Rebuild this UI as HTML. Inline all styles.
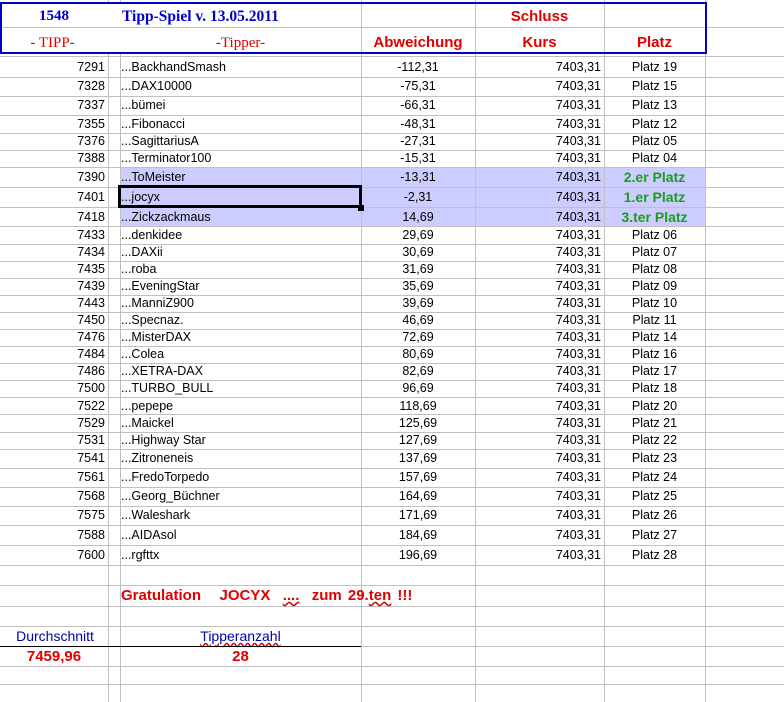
<!DOCTYPE html>
<html><head><meta charset="utf-8"><style>
*{margin:0;padding:0;box-sizing:border-box}
body{width:784px;height:702px;background:#fff;position:relative;overflow:hidden;font-family:"Liberation Sans",Arial,sans-serif;font-size:12.5px;color:#000}
.v{position:absolute;top:0;width:1px;height:702px;background:#c0c0c0}
.h{position:absolute;left:0;width:784px;height:1px;background:#c0c0c0}
.r{position:absolute;left:0;width:784px}
.r span{position:absolute;top:0;white-space:nowrap}
.a{left:0;width:105px;text-align:right}
.b{left:121px}
.c{left:361px;width:114px;text-align:center}
.d{left:475px;width:126px;text-align:right}
.e{left:604px;width:101px;text-align:center}
.g{color:#1a9e1a;font-weight:bold;font-size:14px}
.hl{position:absolute;left:120px;width:585px;top:167px;height:59px;background:#ccccff}
</style></head><body>
<div class="hl"></div>
<div class="v" style="left:108px"></div>
<div class="v" style="left:120px"></div>
<div class="v" style="left:361px"></div>
<div class="v" style="left:475px"></div>
<div class="v" style="left:604px"></div>
<div class="v" style="left:705px"></div>
<div class="h" style="top:27px"></div>
<div class="h" style="top:56px"></div><div class="h" style="top:77px"></div><div class="h" style="top:96px"></div><div class="h" style="top:115px"></div><div class="h" style="top:133px"></div><div class="h" style="top:150px"></div><div class="h" style="top:167px"></div><div class="h" style="top:187px"></div><div class="h" style="top:207px"></div><div class="h" style="top:226px"></div><div class="h" style="top:244px"></div><div class="h" style="top:261px"></div><div class="h" style="top:278px"></div><div class="h" style="top:295px"></div><div class="h" style="top:312px"></div><div class="h" style="top:329px"></div><div class="h" style="top:346px"></div><div class="h" style="top:363px"></div><div class="h" style="top:380px"></div><div class="h" style="top:397px"></div><div class="h" style="top:414px"></div><div class="h" style="top:432px"></div><div class="h" style="top:449px"></div><div class="h" style="top:468px"></div><div class="h" style="top:487px"></div><div class="h" style="top:506px"></div><div class="h" style="top:525px"></div><div class="h" style="top:545px"></div><div class="h" style="top:565px"></div><div class="h" style="top:585px"></div><div class="h" style="top:606px"></div><div class="h" style="top:626px"></div><div class="h" style="top:646px"></div><div class="h" style="top:666px"></div><div class="h" style="top:684px"></div>

<!-- header box -->
<div style="position:absolute;left:0;top:2px;width:707px;height:52px;border:2px solid #0000cc;background:#fff"></div>
<div style="position:absolute;left:361px;top:4px;width:1px;height:48px;background:#c0c0c0"></div>
<div style="position:absolute;left:475px;top:4px;width:1px;height:48px;background:#c0c0c0"></div>
<div style="position:absolute;left:604px;top:4px;width:1px;height:48px;background:#c0c0c0"></div>
<div style="position:absolute;left:2px;top:27px;width:703px;height:1px;background:#c0c0c0"></div>
<div style="position:absolute;left:0;top:8px;width:108px;text-align:center;font:bold 15px 'Liberation Serif',serif;color:#0000cc">1548</div>
<div style="position:absolute;left:122px;top:8px;font:bold 15.5px 'Liberation Serif',serif;color:#0000cc">Tipp-Spiel v. 13.05.2011</div>
<div style="position:absolute;left:475px;top:8px;width:129px;text-align:center;font:bold 15px 'Liberation Sans',sans-serif;color:#e00000">Schluss</div>
<div style="position:absolute;left:0;top:35px;width:105px;text-align:center;font:15px 'Liberation Serif',serif;color:#e00000">- TIPP-</div>
<div style="position:absolute;left:120px;top:35px;width:241px;text-align:center;font:15px 'Liberation Serif',serif;color:#e00000">-Tipper-</div>
<div style="position:absolute;left:361px;top:34px;width:114px;text-align:center;font:bold 15px 'Liberation Sans',sans-serif;color:#e00000">Abweichung</div>
<div style="position:absolute;left:475px;top:34px;width:129px;text-align:center;font:bold 15px 'Liberation Sans',sans-serif;color:#e00000">Kurs</div>
<div style="position:absolute;left:604px;top:34px;width:101px;text-align:center;font:bold 15px 'Liberation Sans',sans-serif;color:#e00000">Platz</div>

<div class="r" style="top:57px;line-height:20px"><span class="a">7291</span><span class="b">...BackhandSmash</span><span class="c">-112,31</span><span class="d">7403,31</span><span class="e">Platz 19</span></div>
<div class="r" style="top:77px;line-height:19px"><span class="a">7328</span><span class="b">...DAX10000</span><span class="c">-75,31</span><span class="d">7403,31</span><span class="e">Platz 15</span></div>
<div class="r" style="top:96px;line-height:19px"><span class="a">7337</span><span class="b">...bümei</span><span class="c">-66,31</span><span class="d">7403,31</span><span class="e">Platz 13</span></div>
<div class="r" style="top:115px;line-height:18px"><span class="a">7355</span><span class="b">...Fibonacci</span><span class="c">-48,31</span><span class="d">7403,31</span><span class="e">Platz 12</span></div>
<div class="r" style="top:133px;line-height:17px"><span class="a">7376</span><span class="b">...SagittariusA</span><span class="c">-27,31</span><span class="d">7403,31</span><span class="e">Platz 05</span></div>
<div class="r" style="top:150px;line-height:17px"><span class="a">7388</span><span class="b">...Terminator100</span><span class="c">-15,31</span><span class="d">7403,31</span><span class="e">Platz 04</span></div>
<div class="r" style="top:167px;line-height:20px"><span class="a">7390</span><span class="b">...ToMeister</span><span class="c">-13,31</span><span class="d">7403,31</span><span class="e g">2.er Platz</span></div>
<div class="r" style="top:187px;line-height:20px"><span class="a">7401</span><span class="b">...jocyx</span><span class="c">-2,31</span><span class="d">7403,31</span><span class="e g">1.er Platz</span></div>
<div class="r" style="top:207px;line-height:20px"><span class="a">7418</span><span class="b">...Zickzackmaus</span><span class="c">14,69</span><span class="d">7403,31</span><span class="e g">3.ter Platz</span></div>
<div class="r" style="top:226px;line-height:18px"><span class="a">7433</span><span class="b">...denkidee</span><span class="c">29,69</span><span class="d">7403,31</span><span class="e">Platz 06</span></div>
<div class="r" style="top:244px;line-height:17px"><span class="a">7434</span><span class="b">...DAXii</span><span class="c">30,69</span><span class="d">7403,31</span><span class="e">Platz 07</span></div>
<div class="r" style="top:261px;line-height:17px"><span class="a">7435</span><span class="b">...roba</span><span class="c">31,69</span><span class="d">7403,31</span><span class="e">Platz 08</span></div>
<div class="r" style="top:278px;line-height:17px"><span class="a">7439</span><span class="b">...EveningStar</span><span class="c">35,69</span><span class="d">7403,31</span><span class="e">Platz 09</span></div>
<div class="r" style="top:295px;line-height:17px"><span class="a">7443</span><span class="b">...ManniZ900</span><span class="c">39,69</span><span class="d">7403,31</span><span class="e">Platz 10</span></div>
<div class="r" style="top:312px;line-height:17px"><span class="a">7450</span><span class="b">...Specnaz.</span><span class="c">46,69</span><span class="d">7403,31</span><span class="e">Platz 11</span></div>
<div class="r" style="top:329px;line-height:17px"><span class="a">7476</span><span class="b">...MisterDAX</span><span class="c">72,69</span><span class="d">7403,31</span><span class="e">Platz 14</span></div>
<div class="r" style="top:346px;line-height:17px"><span class="a">7484</span><span class="b">...Colea</span><span class="c">80,69</span><span class="d">7403,31</span><span class="e">Platz 16</span></div>
<div class="r" style="top:363px;line-height:17px"><span class="a">7486</span><span class="b">...XETRA-DAX</span><span class="c">82,69</span><span class="d">7403,31</span><span class="e">Platz 17</span></div>
<div class="r" style="top:380px;line-height:17px"><span class="a">7500</span><span class="b">...TURBO_BULL</span><span class="c">96,69</span><span class="d">7403,31</span><span class="e">Platz 18</span></div>
<div class="r" style="top:397px;line-height:18px"><span class="a">7522</span><span class="b">...pepepe</span><span class="c">118,69</span><span class="d">7403,31</span><span class="e">Platz 20</span></div>
<div class="r" style="top:414px;line-height:18px"><span class="a">7529</span><span class="b">...Maickel</span><span class="c">125,69</span><span class="d">7403,31</span><span class="e">Platz 21</span></div>
<div class="r" style="top:432px;line-height:17px"><span class="a">7531</span><span class="b">...Highway Star</span><span class="c">127,69</span><span class="d">7403,31</span><span class="e">Platz 22</span></div>
<div class="r" style="top:449px;line-height:19px"><span class="a">7541</span><span class="b">...Zitroneneis</span><span class="c">137,69</span><span class="d">7403,31</span><span class="e">Platz 23</span></div>
<div class="r" style="top:468px;line-height:19px"><span class="a">7561</span><span class="b">...FredoTorpedo</span><span class="c">157,69</span><span class="d">7403,31</span><span class="e">Platz 24</span></div>
<div class="r" style="top:487px;line-height:19px"><span class="a">7568</span><span class="b">...Georg_Büchner</span><span class="c">164,69</span><span class="d">7403,31</span><span class="e">Platz 25</span></div>
<div class="r" style="top:506px;line-height:19px"><span class="a">7575</span><span class="b">...Waleshark</span><span class="c">171,69</span><span class="d">7403,31</span><span class="e">Platz 26</span></div>
<div class="r" style="top:525px;line-height:20px"><span class="a">7588</span><span class="b">...AIDAsol</span><span class="c">184,69</span><span class="d">7403,31</span><span class="e">Platz 27</span></div>
<div class="r" style="top:545px;line-height:20px"><span class="a">7600</span><span class="b">...rgfttx</span><span class="c">196,69</span><span class="d">7403,31</span><span class="e">Platz 28</span></div>

<!-- selection -->
<div style="position:absolute;left:118px;top:185px;width:244px;height:23px;border:3px solid #000"></div>
<div style="position:absolute;left:358px;top:205px;width:6px;height:6px;background:#000"></div>

<div style="position:absolute;left:121px;top:587px;font:bold 15px 'Liberation Sans',sans-serif;color:#e00000;white-space:pre;word-spacing:2px">Gratulation   JOCYX  <span style="text-decoration:underline wavy #c00">....</span>  zum 29.<span style="text-decoration:underline wavy #c00">ten</span> !!!</div>
<div style="position:absolute;left:0;top:628px;width:110px;text-align:center;font:14px 'Liberation Sans',sans-serif;color:#0000aa">Durchschnitt</div>
<div style="position:absolute;left:120px;top:628px;width:241px;text-align:center;font:14px 'Liberation Sans',sans-serif;color:#0000aa"><span style="text-decoration:underline wavy #c00">Tipperanzahl</span></div>
<div style="position:absolute;left:0;top:646px;width:361px;height:1px;background:#000"></div>
<div style="position:absolute;left:0;top:648px;width:108px;text-align:center;font:bold 15px 'Liberation Sans',sans-serif;color:#e00000">7459,96</div>
<div style="position:absolute;left:120px;top:648px;width:241px;text-align:center;font:bold 15px 'Liberation Sans',sans-serif;color:#e00000">28</div>
</body></html>
